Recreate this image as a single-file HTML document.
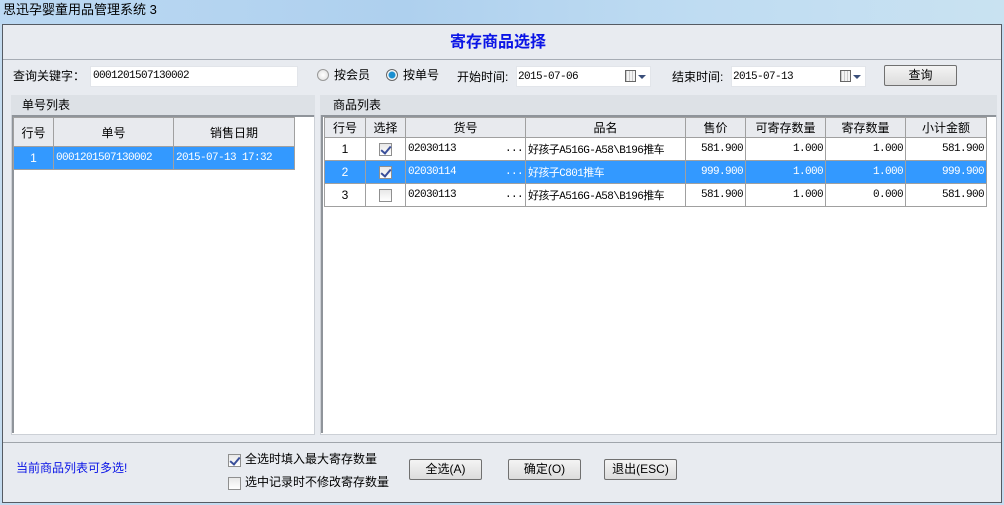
<!DOCTYPE html>
<html><head><meta charset="utf-8">
<style>
*{margin:0;padding:0;box-sizing:border-box}
body{width:1004px;height:505px;overflow:hidden;position:relative;background:#c4dbef;font-family:"Liberation Sans","Noto Sans CJK SC",sans-serif;font-size:12px;color:#000}
.a{position:absolute}
.t{position:absolute;white-space:nowrap;line-height:14px}
.mono{font-family:"Liberation Mono","Noto Sans CJK SC",monospace;font-size:11px;letter-spacing:-0.6px}
.inp{position:absolute;background:#fff;border:1px solid #e2e5ea}
.btn{position:absolute;border:1px solid #707070;background:linear-gradient(#f4f4f4,#dcdcdc);border-radius:2px;text-align:center;line-height:18px;font-size:12px}
table{border-collapse:collapse;position:absolute;table-layout:fixed}
td{border:1px solid #a0a0a0;height:23px;white-space:nowrap;overflow:hidden;padding:0 2px;font-size:12px}
th{border:1px solid #a0a0a0;background:#e8eaee;font-weight:normal;font-size:12px}
.sel td{background:#3399ff;color:#fff}
.r{text-align:right}.c{text-align:center}
.cb{display:inline-block;width:13px;height:13px;border:1px solid #8f8f8f;background:linear-gradient(#e8e8e8,#fff);vertical-align:middle;position:relative}
.cb.on::after{content:"";position:absolute;left:3px;top:0px;width:4px;height:8px;border:solid #3a4f9a;border-width:0 2px 2px 0;transform:rotate(40deg)}
.cal{position:absolute;width:11px;height:12px;border:1px solid #666;background:repeating-linear-gradient(90deg,#ccc 0 1px,#f4f4f4 1px 3px)}
.arr{position:absolute;width:0;height:0;border-left:4px solid transparent;border-right:4px solid transparent;border-top:4px solid #3a4f7a}
</style></head><body>
<div class="a" style="left:0;top:0;width:1004px;height:24px;background:linear-gradient(90deg,#bcd9f3,#aed0ee 40%,#bfdcf2 70%,#c9e2f1)"></div>
<div class="t" style="left:3px;top:3px;font-size:13px">思迅孕婴童用品管理系统 3</div>
<div class="a" style="left:2px;top:24px;width:1000px;height:479px;background:#e8ebf0;border:1px solid #555b63"></div>
<div class="t" style="left:450px;top:34px;font-size:16px;font-weight:bold;color:#0a14e6;line-height:18px">寄存商品选择</div>
<div class="a" style="left:3px;top:59px;width:998px;height:1px;background:#a6acb4"></div>

<div class="t" style="left:13px;top:69px">查询关键字：</div>
<div class="inp" style="left:90px;top:66px;width:208px;height:21px"></div>
<div class="t mono" style="left:93px;top:69px">0001201507130002</div>
<div class="a" style="left:317px;top:69px;width:12px;height:12px;border-radius:50%;border:1px solid #999;background:radial-gradient(#fff,#ddd)"></div>
<div class="t" style="left:334px;top:68px">按会员</div>
<div class="a" style="left:386px;top:69px;width:12px;height:12px;border-radius:50%;border:1px solid #666;background:radial-gradient(#1a8fd0 0 3px,#fff 4px,#ddd)"></div>
<div class="t" style="left:403px;top:68px">按单号</div>
<div class="t" style="left:457px;top:70px">开始时间:</div>
<div class="inp" style="left:516px;top:66px;width:135px;height:21px"></div>
<div class="t mono" style="left:518px;top:70px">2015-07-06</div>
<div class="cal" style="left:625px;top:70px"></div><div class="arr" style="left:638px;top:75px"></div>
<div class="t" style="left:672px;top:70px">结束时间:</div>
<div class="inp" style="left:731px;top:66px;width:135px;height:21px"></div>
<div class="t mono" style="left:733px;top:70px">2015-07-13</div>
<div class="cal" style="left:840px;top:70px"></div><div class="arr" style="left:853px;top:75px"></div>
<div class="btn" style="left:884px;top:65px;width:73px;height:21px">查询</div>

<!-- left panel -->
<div class="a" style="left:11px;top:95px;width:304px;height:340px;background:#fff;border:1px solid #ccd0d6"></div>
<div class="a" style="left:11px;top:95px;width:304px;height:20px;background:#dde1e6"></div>
<div class="t" style="left:22px;top:98px">单号列表</div>
<div class="a" style="left:12px;top:115px;width:302px;height:2px;background:#8f949a"></div>
<div class="a" style="left:12px;top:117px;width:2px;height:316px;background:#8f949a"></div>
<table style="left:13px;top:117px;width:281px">
<colgroup><col style="width:40px"><col style="width:120px"><col style="width:121px"></colgroup>
<tr><th style="height:29px">行号</th><th>单号</th><th>销售日期</th></tr>
<tr class="sel"><td class="c">1</td><td class="mono">0001201507130002</td><td class="mono">2015-07-13 17:32</td></tr>
</table>

<!-- right panel -->
<div class="a" style="left:320px;top:95px;width:677px;height:340px;background:#fff;border:1px solid #ccd0d6"></div>
<div class="a" style="left:320px;top:95px;width:677px;height:20px;background:#dde1e6"></div>
<div class="t" style="left:333px;top:98px">商品列表</div>
<div class="a" style="left:321px;top:115px;width:675px;height:2px;background:#8f949a"></div>
<div class="a" style="left:321px;top:117px;width:2px;height:316px;background:#8f949a"></div>
<table style="left:324px;top:117px;width:662px">
<colgroup><col style="width:41px"><col style="width:40px"><col style="width:120px"><col style="width:160px"><col style="width:60px"><col style="width:80px"><col style="width:80px"><col style="width:81px"></colgroup>
<tr><th style="height:20px">行号</th><th>选择</th><th>货号</th><th>品名</th><th>售价</th><th>可寄存数量</th><th>寄存数量</th><th>小计金额</th></tr>
<tr><td class="c">1</td><td class="c"><span class="cb on"></span></td><td class="mono">02030113<span style="float:right">...</span></td><td class="mono">好孩子A516G-A58\B196推车</td><td class="r mono">581.900</td><td class="r mono">1.000</td><td class="r mono">1.000</td><td class="r mono">581.900</td></tr>
<tr class="sel"><td class="c">2</td><td class="c"><span class="cb on"></span></td><td class="mono">02030114<span style="float:right">...</span></td><td class="mono">好孩子C801推车</td><td class="r mono">999.900</td><td class="r mono">1.000</td><td class="r mono">1.000</td><td class="r mono">999.900</td></tr>
<tr><td class="c">3</td><td class="c"><span class="cb"></span></td><td class="mono">02030113<span style="float:right">...</span></td><td class="mono">好孩子A516G-A58\B196推车</td><td class="r mono">581.900</td><td class="r mono">1.000</td><td class="r mono">0.000</td><td class="r mono">581.900</td></tr>
</table>

<div class="a" style="left:3px;top:442px;width:998px;height:1px;background:#a0a5ab"></div>
<div class="t" style="left:16px;top:461px;color:#0a14e6">当前商品列表可多选!</div>
<div class="a" style="left:228px;top:453px"><span class="cb on"></span></div>
<div class="t" style="left:245px;top:452px">全选时填入最大寄存数量</div>
<div class="a" style="left:228px;top:476px"><span class="cb"></span></div>
<div class="t" style="left:245px;top:475px">选中记录时不修改寄存数量</div>
<div class="btn" style="left:409px;top:459px;width:73px;height:21px">全选(A)</div>
<div class="btn" style="left:508px;top:459px;width:73px;height:21px">确定(O)</div>
<div class="btn" style="left:604px;top:459px;width:73px;height:21px">退出(ESC)</div>
</body></html>
